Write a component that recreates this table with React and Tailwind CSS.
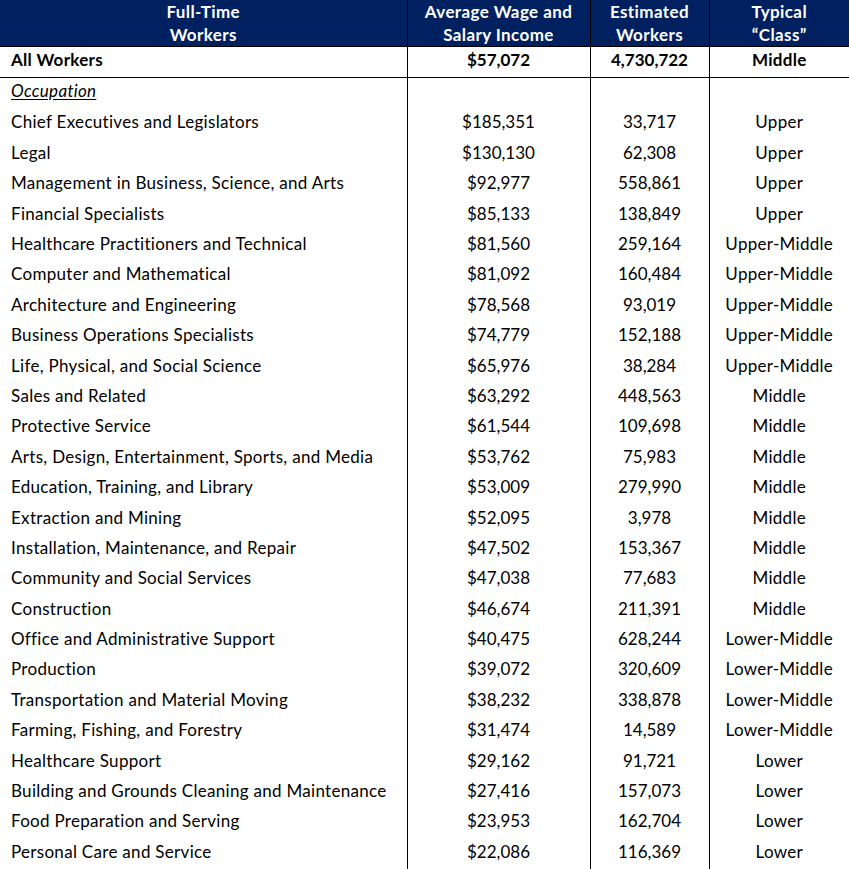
import React from 'react';

const rows = [
  ['Chief Executives and Legislators', '$185,351', '33,717', 'Upper'],
  ['Legal', '$130,130', '62,308', 'Upper'],
  ['Management in Business, Science, and Arts', '$92,977', '558,861', 'Upper'],
  ['Financial Specialists', '$85,133', '138,849', 'Upper'],
  ['Healthcare Practitioners and Technical', '$81,560', '259,164', 'Upper-Middle'],
  ['Computer and Mathematical', '$81,092', '160,484', 'Upper-Middle'],
  ['Architecture and Engineering', '$78,568', '93,019', 'Upper-Middle'],
  ['Business Operations Specialists', '$74,779', '152,188', 'Upper-Middle'],
  ['Life, Physical, and Social Science', '$65,976', '38,284', 'Upper-Middle'],
  ['Sales and Related', '$63,292', '448,563', 'Middle'],
  ['Protective Service', '$61,544', '109,698', 'Middle'],
  ['Arts, Design, Entertainment, Sports, and Media', '$53,762', '75,983', 'Middle'],
  ['Education, Training, and Library', '$53,009', '279,990', 'Middle'],
  ['Extraction and Mining', '$52,095', '3,978', 'Middle'],
  ['Installation, Maintenance, and Repair', '$47,502', '153,367', 'Middle'],
  ['Community and Social Services', '$47,038', '77,683', 'Middle'],
  ['Construction', '$46,674', '211,391', 'Middle'],
  ['Office and Administrative Support', '$40,475', '628,244', 'Lower-Middle'],
  ['Production', '$39,072', '320,609', 'Lower-Middle'],
  ['Transportation and Material Moving', '$38,232', '338,878', 'Lower-Middle'],
  ['Farming, Fishing, and Forestry', '$31,474', '14,589', 'Lower-Middle'],
  ['Healthcare Support', '$29,162', '91,721', 'Lower'],
  ['Building and Grounds Cleaning and Maintenance', '$27,416', '157,073', 'Lower'],
  ['Food Preparation and Serving', '$23,953', '162,704', 'Lower'],
  ['Personal Care and Service', '$22,086', '116,369', 'Lower'],
];

export default function App() {
  return (
    <div className="w-[849px] h-[869px] overflow-hidden bg-white text-black font-['Lato',sans-serif] text-[17px]">
      <table className="w-full table-fixed border-collapse">
        <colgroup>
          <col className="w-[407px]" />
          <col className="w-[183px]" />
          <col className="w-[119px]" />
          <col className="w-[140px]" />
        </colgroup>
        <thead>
          <tr className="h-[46px] bg-[#002060] text-white font-bold leading-[23px] text-center tracking-[0.4px]">
            <th className="border-r border-b border-black">Full-Time<br />Workers</th>
            <th className="border-r border-b border-black">Average Wage and<br />Salary Income</th>
            <th className="border-r border-b border-black">Estimated<br />Workers</th>
            <th className="border-b border-black">Typical<br />“Class”</th>
          </tr>
        </thead>
        <tbody>
          <tr className="h-[30px] font-bold">
            <td className="border-r border-b border-black pl-[11px] pb-1 tracking-[0.3px]">All Workers</td>
            <td className="border-r border-b border-black text-center pb-1">$57,072</td>
            <td className="border-r border-b border-black text-center pb-1">4,730,722</td>
            <td className="border-b border-black text-center pb-1 tracking-[0.3px]">Middle</td>
          </tr>
          <tr className="h-[28px]">
            <td className="border-r border-black pl-[11px] pb-1 italic underline underline-offset-2 tracking-[0.3px]">Occupation</td>
            <td className="border-r border-black"></td>
            <td className="border-r border-black"></td>
            <td></td>
          </tr>
          {rows.map((r) => (
            <tr key={r[0]} className="h-[30.4px]">
              <td className="border-r border-black pl-[11px] whitespace-nowrap tracking-[0.3px]">{r[0]}</td>
              <td className="border-r border-black text-center">{r[1]}</td>
              <td className="border-r border-black text-center">{r[2]}</td>
              <td className="text-center tracking-[0.3px]">{r[3]}</td>
            </tr>
          ))}
          <tr className="h-[20px]">
            <td className="border-r border-black"></td>
            <td className="border-r border-black"></td>
            <td className="border-r border-black"></td>
            <td></td>
          </tr>
        </tbody>
      </table>
    </div>
  );
}
